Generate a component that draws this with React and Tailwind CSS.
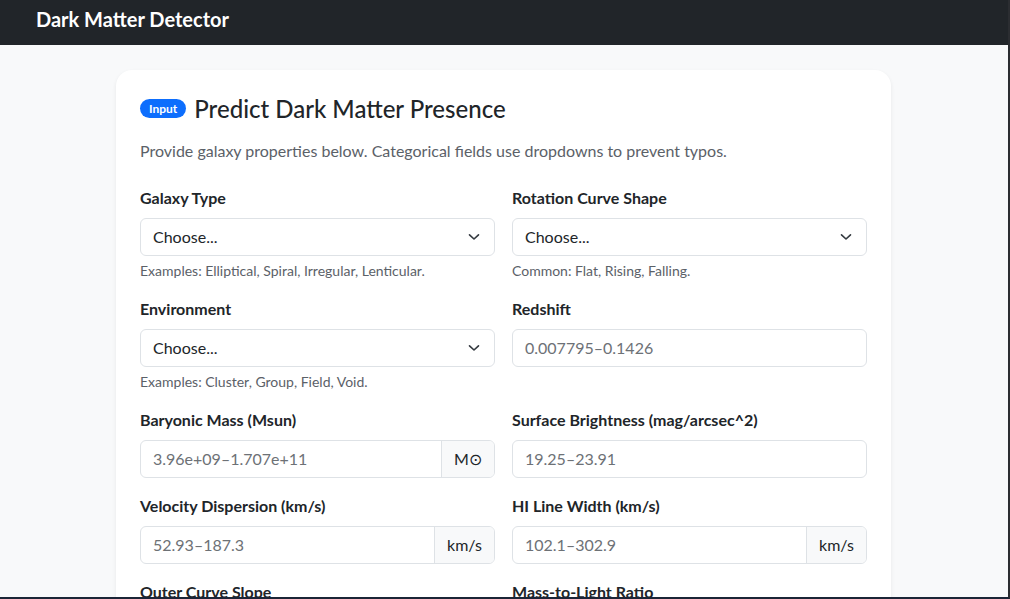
import React from "react";

const font = { fontFamily: 'Lato, "Noto Sans", sans-serif' };

function Chevron() {
  return (
    <svg width="12" height="8" viewBox="0 0 12 8" className="shrink-0 mr-[2px]">
      <path d="M1.5 1.8l4.5 4.2 4.5-4.2" fill="none" stroke="#343a40" strokeWidth="1.6" strokeLinecap="round" strokeLinejoin="round" />
    </svg>
  );
}

function Label({ children }) {
  return <div className="text-[16px] font-bold leading-6 text-[#212529] mb-2">{children}</div>;
}

function Help({ children }) {
  return <div className="mt-1 text-[14px] leading-[21px] text-[#5b6168]">{children}</div>;
}

function SelectField({ label, help }) {
  return (
    <div>
      <Label>{label}</Label>
      <div className="h-[38px] border border-[#dee2e6] rounded-md bg-white flex items-center justify-between pl-3 pr-[12px]">
        <span className="text-[16px] text-[#212529]">Choose...</span>
        <Chevron />
      </div>
      {help && <Help>{help}</Help>}
    </div>
  );
}

function InputField({ label, placeholder, addon, addonW }) {
  return (
    <div>
      <Label>{label}</Label>
      <div className="h-[38px] border border-[#dee2e6] rounded-md bg-white flex overflow-hidden">
        <div className="flex-1 flex items-center px-3 text-[16px] text-[#6d7176]">{placeholder}</div>
        {addon && (
          <div className={`flex items-center justify-center border-l border-[#dee2e6] bg-[#f8f9fa] text-[16px] text-[#212529] ${addonW}`}>
            {addon}
          </div>
        )}
      </div>
    </div>
  );
}

export default function App() {
  return (
    <div style={font} className="w-[1010px] h-[599px] overflow-hidden bg-[#f8f9fa] border-r-2 border-r-[#2b2d31] border-b-2 border-b-[#1b2536] box-border">
      <div className="h-[45px] bg-[#212529] flex items-center px-[36px] pb-[7px]">
        <span className="text-white text-[20px] font-bold">Dark Matter Detector</span>
      </div>
      <div className="pt-[25px]">
        <div className="ml-[116px] w-[775px] bg-white rounded-2xl shadow-[0_0.125rem_0.25rem_rgba(0,0,0,0.075)] px-6 pt-6 pb-10">
          <div className="flex items-center gap-2 h-[29px]">
            <span className="bg-[#0d6efd] text-white text-[12px] font-bold rounded-full px-[9px] h-[19px] flex items-center leading-none">Input</span>
            <span className="text-[24px] font-medium text-[#212529] leading-[29px]">Predict Dark Matter Presence</span>
          </div>
          <p className="mt-4 mb-[23px] text-[16px] leading-6 text-[#5b6168]">
            Provide galaxy properties below. Categorical fields use dropdowns to prevent typos.
          </p>
          <div className="grid grid-cols-2 gap-x-[17px] gap-y-4">
            <SelectField label="Galaxy Type" help="Examples: Elliptical, Spiral, Irregular, Lenticular." />
            <SelectField label="Rotation Curve Shape" help="Common: Flat, Rising, Falling." />
            <SelectField label="Environment" help="Examples: Cluster, Group, Field, Void." />
            <InputField label="Redshift" placeholder="0.007795–0.1426" />
            <InputField label="Baryonic Mass (Msun)" placeholder="3.96e+09–1.707e+11" addon="M⊙" addonW="w-[53px]" />
            <InputField label="Surface Brightness (mag/arcsec^2)" placeholder="19.25–23.91" />
            <InputField label="Velocity Dispersion (km/s)" placeholder="52.93–187.3" addon="km/s" addonW="w-[60px]" />
            <InputField label="HI Line Width (km/s)" placeholder="102.1–302.9" addon="km/s" addonW="w-[60px]" />
            <InputField label="Outer Curve Slope" placeholder="" />
            <InputField label="Mass-to-Light Ratio" placeholder="" />
          </div>
        </div>
      </div>
    </div>
  );
}
